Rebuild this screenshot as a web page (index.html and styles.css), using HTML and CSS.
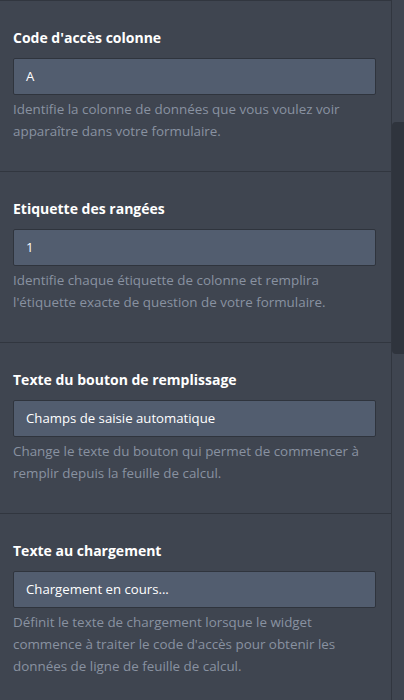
FILE: index.html
```html
<!DOCTYPE html>
<html lang="fr">
<head>
<meta charset="utf-8">
<link rel="stylesheet" href="styles.css">
</head>
<body>
<div class="frame">
  <div class="panel">
    <section class="field">
      <h3 class="label">Code d'accès colonne</h3>
      <div class="input">A</div>
      <p class="help">Identifie la colonne de données que vous voulez voir apparaître dans votre formulaire.</p>
    </section>
    <section class="field">
      <h3 class="label">Etiquette des rangées</h3>
      <div class="input">1</div>
      <p class="help">Identifie chaque étiquette de colonne et remplira l'étiquette exacte de question de votre formulaire.</p>
    </section>
    <section class="field">
      <h3 class="label">Texte du bouton de remplissage</h3>
      <div class="input">Champs de saisie automatique</div>
      <p class="help">Change le texte du bouton qui permet de commencer à remplir depuis la feuille de calcul.</p>
    </section>
    <section class="field">
      <h3 class="label">Texte au chargement</h3>
      <div class="input">Chargement en cours...</div>
      <p class="help">Définit le texte de chargement lorsque le widget commence à traiter le code d'accès pour obtenir les données de ligne de feuille de calcul.</p>
    </section>
  </div>
  <div class="track">
    <div class="thumb"></div>
  </div>
</div>
</body>
</html>
```
FILE: styles.css
```css
html, body {
  margin: 0;
  padding: 0;
  background: #3f4550;
  height: 700px;
  overflow: hidden;
}
.frame {
  display: flex;
  height: 700px;
  font-family: "Open Sans", "Noto Sans", sans-serif;
}
.panel {
  width: 391px;
  flex: none;
  border-right: 1px solid #31363f;
}
.field {
  border-top: 1px solid #31363f;
  padding: 27px 15px 29px 13px;
}
.label {
  margin: 0;
  font-size: 14px;
  line-height: 20px;
  font-weight: 700;
  color: #ffffff;
}
.input {
  margin-top: 10px;
  height: 35px;
  border: 1px solid #2f343d;
  border-radius: 2px;
  background: #525d6f;
  color: #ffffff;
  font-size: 13.2px;
  line-height: 35px;
  padding: 0 12px;
}
.help {
  margin: 3px 0 0;
  font-size: 13.4px;
  line-height: 22px;
  color: #8992a1;
}
.track {
  flex: 1;
}
.thumb {
  margin-top: 122px;
  height: 232px;
  background: #2f343d;
  border-radius: 4px 0 0 4px;
}
```
